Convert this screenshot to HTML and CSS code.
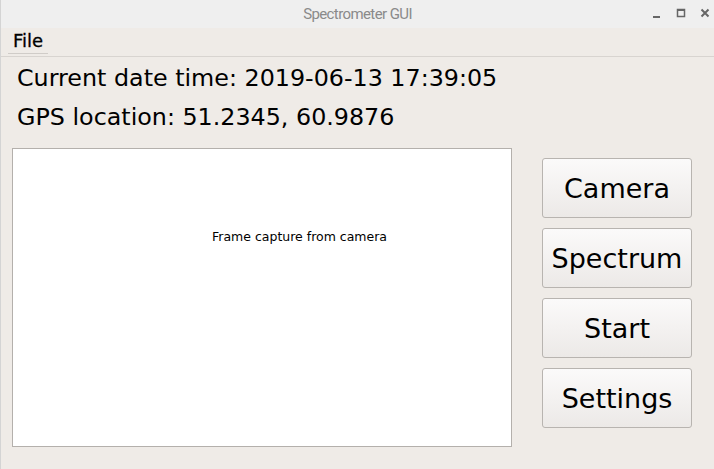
FILE: index.html
```html
<!DOCTYPE html>
<html>
<head>
<meta charset="utf-8">
<link rel="stylesheet" href="styles.css">
</head>
<body>
<div class="window">
  <div class="titlebar">
    <div class="title">Spectrometer GUI</div>
    <div class="controls">
      <svg class="ctl" width="12" height="12" viewBox="0 0 12 12"><rect x="1" y="8" width="7" height="2" fill="#666"/></svg>
      <svg class="ctl" width="12" height="12" viewBox="0 0 12 12"><rect x="1.5" y="1.5" width="7" height="7" fill="none" stroke="#666" stroke-width="1.5"/><rect x="1" y="1" width="8" height="2" fill="#666"/></svg>
      <svg class="ctl" width="12" height="12" viewBox="0 0 12 12"><path d="M1.5 1.5 L8.5 8.5 M8.5 1.5 L1.5 8.5" stroke="#666" stroke-width="2"/></svg>
    </div>
  </div>
  <div class="menubar">
    <div class="menu-item">File</div>
  </div>
  <div class="content">
    <div class="label">Current date time: 2019-06-13 17:39:05</div>
    <div class="label">GPS location: 51.2345, 60.9876</div>
    <div class="main">
      <div class="frame"><div class="frame-text">Frame capture from camera</div></div>
      <div class="buttons">
        <button class="btn">Camera</button>
        <button class="btn">Spectrum</button>
        <button class="btn">Start</button>
        <button class="btn">Settings</button>
      </div>
    </div>
  </div>
</div>
</body>
</html>
```
FILE: styles.css
```css
html, body {
  margin: 0;
  padding: 0;
  width: 714px;
  height: 469px;
  overflow: hidden;
  background: #efebe7;
}
.window {
  width: 714px;
  height: 469px;
  border-left: 1px solid #d4d4d4;
  box-sizing: border-box;
  font-family: "DejaVu Sans", sans-serif;
  color: #000;
}
.titlebar {
  height: 28px;
  background: #efefef;
  display: flex;
  align-items: center;
  justify-content: center;
  position: relative;
}
.title {
  font-family: Roboto, sans-serif;
  font-size: 15px;
  color: #8a8a8a;
  letter-spacing: -0.6px;
}
.controls {
  position: absolute;
  right: 2px;
  top: 8px;
  display: flex;
  gap: 12px;
}
.menubar {
  height: 28px;
  border-bottom: 1px solid #d8d4d0;
  display: flex;
  align-items: flex-end;
  padding-left: 7px;
}
.menu-item {
  font-size: 18px;
  padding: 0 4px 2px 5px;
  border-bottom: 1px solid #d0ccc8;
  margin-bottom: 2px;
  width: 31px;
  -webkit-text-stroke: 0.3px #000;
}
.content {
  padding: 2px 0 0 11px;
}
.label {
  font-size: 23.8px;
  height: 39px;
  line-height: 39px;
  padding-left: 5px;
}
.main {
  display: flex;
  margin-top: 11px;
  align-items: flex-start;
}
.frame {
  width: 500px;
  height: 299px;
  background: #fff;
  border: 1px solid #b4b0ac;
  box-sizing: border-box;
}
.frame-text {
  font-size: 12.5px;
  padding: 80px 0 0 199px;
}
.buttons {
  margin-left: 30px;
  margin-top: 10px;
  display: flex;
  flex-direction: column;
  gap: 10px;
}
.btn {
  width: 150px;
  height: 60px;
  font-family: "DejaVu Sans", sans-serif;
  font-size: 27px;
  color: #000;
  border: 1px solid #b8b4b0;
  border-radius: 3px;
  background: linear-gradient(#fbfafa, #ece9e7);
  padding: 0;
}
```
